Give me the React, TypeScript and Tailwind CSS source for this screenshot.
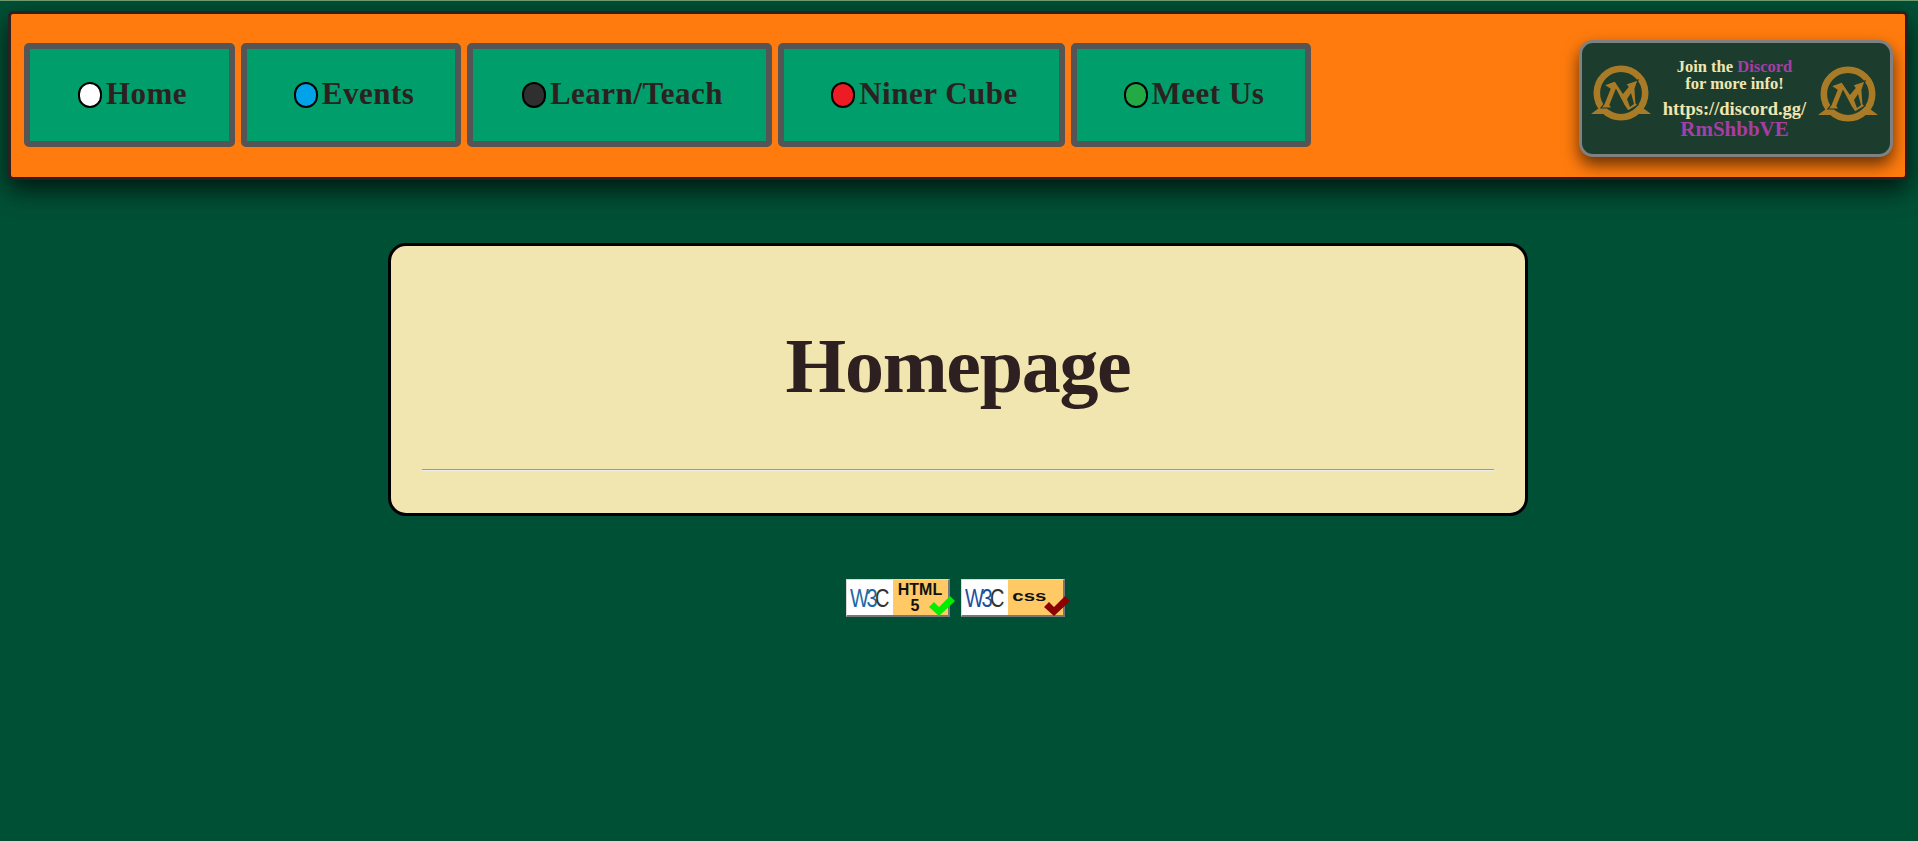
import React from 'react';

const navItems = [
  { label: 'Home', width: 'w-[211px]', dot: 'bg-white' },
  { label: 'Events', width: 'w-[220px]', dot: 'bg-[#00a3e8]' },
  { label: 'Learn/Teach', width: 'w-[305px]', dot: 'bg-[#2f2f2f]' },
  { label: 'Niner Cube', width: 'w-[287px]', dot: 'bg-[#ed1c24]' },
  { label: 'Meet Us', width: 'w-[240px]', dot: 'bg-[#22aa45]' },
];

function MtgLogo({ className }: { className: string }) {
  return (
    <svg viewBox="0 0 60 62" className={`w-[60px] h-[62px] shrink-0 ${className}`}>
      <circle cx="30" cy="29" r="24.2" fill="none" stroke="#a97b27" strokeWidth="6.6" />
      <path d="M0 50 L8 44 L13 50 Z M60 50 L52 44 L47 50 Z" fill="#a97b27" />
      <path
        d="M13 21 L24 17 L32 29 L37 23 L35 20 L47 16 L44 25 L45 39 L47 41 L37 47 L33 41 L25 26 L19 41 L21 44 L10 44 L13 40 L19 25 Z"
        fill="#a97b27"
        stroke="#1c3d2d"
        strokeWidth="1.2"
      />
      <path d="M40 29 L36 35 L39 43 L43 40 Z" fill="#1c3d2d" />
    </svg>
  );
}

function Badge({ bg, check, children }: { bg: string; check: string; children: React.ReactNode }) {
  return (
    <div className="relative w-[104px] h-[38px] flex border-t border-l border-[#d8d8d8] border-r-2 border-b-2 border-r-[#777] border-b-[#777]">
      <div className="w-[46px] bg-white flex items-center justify-center font-['Liberation_Sans',sans-serif] text-[20px] tracking-[-2.5px] leading-none">
        <span className="[transform:scaleY(1.3)] pr-[2px]">
          <span className={bg}>W3</span>
          <span className="text-[#333]">C</span>
        </span>
      </div>
      <div className="flex-1 bg-[#ffc966] text-[#111] font-['Liberation_Sans',sans-serif]">{children}</div>
      <svg viewBox="0 0 28 24" className="absolute right-[-8px] bottom-[-3px] w-[28px] h-[24px]">
        <path d="M1 13 L6 8 L11 13 L22 2 L27 7 L11 22 Z" fill={check} />
      </svg>
    </div>
  );
}

export default function App() {
  return (
    <div className="min-h-screen bg-[#005035] border-t border-t-[#6f9a70] pl-[8px] pr-[10px] font-['Liberation_Serif',serif] overflow-hidden">
      <header className="mt-[10px] h-[169px] flex items-start justify-between pl-[13px] pr-[12px] bg-[#ff7b0d] border-[3px] border-[#2e2020] rounded-[5px] shadow-[0_10px_24px_rgba(0,0,0,0.7)]">
        <nav className="flex gap-[6px] mt-[29px]">
          {navItems.map((item) => (
            <a
              key={item.label}
              className={`${item.width} h-[104px] flex items-center justify-center pl-[6px] bg-[#009e6b] border-[6px] border-[#555] rounded-[5px] text-[#2e2020] text-[31px] font-bold leading-none`}
            >
              <span className={`w-[24px] h-[26px] rounded-full border-2 border-black mr-[4px] shrink-0 ${item.dot}`} />
              <span className="mb-[3px] tracking-[0.5px]">{item.label}</span>
            </a>
          ))}
        </nav>

        <div className="mt-[26px] w-[314px] h-[117px] flex items-center justify-between px-[9px] bg-[#1c3d2d] border-[3px] border-[#808080] rounded-[14px] shadow-[0_8px_16px_rgba(0,0,0,0.6)]">
          <MtgLogo className="mb-[7px]" />
          <div className="text-center text-[#f1e5b0] font-bold leading-none whitespace-nowrap">
            <p className="text-[16.5px] leading-[17px]">
              Join the <span className="text-[#a63ea5]">Discord</span>
            </p>
            <p className="text-[16.5px] leading-[17px]">for more info!</p>
            <p className="text-[18.5px] leading-[20px] mt-[7px]">https://discord.gg/</p>
            <p className="text-[21px] leading-[21px] text-[#a63ea5]">RmShbbVE</p>
          </div>
          <MtgLogo className="mb-[5px] mr-[3px]" />
        </div>
      </header>

      <main className="w-[1140px] mx-auto mt-[63px] h-[273px] bg-[#f1e5b0] border-[3px] border-black rounded-[18px] px-[31px] pt-[75px]">
        <h1 className="text-center text-[78px] font-bold leading-[90px] tracking-[-1.3px] text-[#2e2020]">Homepage</h1>
        <hr className="mt-[58px] border-t border-b border-t-[#999] border-b-[#eee]" />
      </main>

      <footer className="mt-[63px] flex justify-center gap-[11px] pr-[6px]">
        <Badge bg="text-[#1b6aa5]" check="#00ee00">
          <div className="text-center text-[16px] leading-[16px] pt-[2px] font-bold">
            HTML
            <div className="pr-[10px]">5</div>
          </div>
        </Badge>
        <Badge bg="text-[#1c4f9c]" check="#8b0000">
          <div className="text-[14px] leading-none font-bold pl-[3px] pt-[9px] [transform:scaleX(1.45)] origin-left">css</div>
        </Badge>
      </footer>
    </div>
  );
}
